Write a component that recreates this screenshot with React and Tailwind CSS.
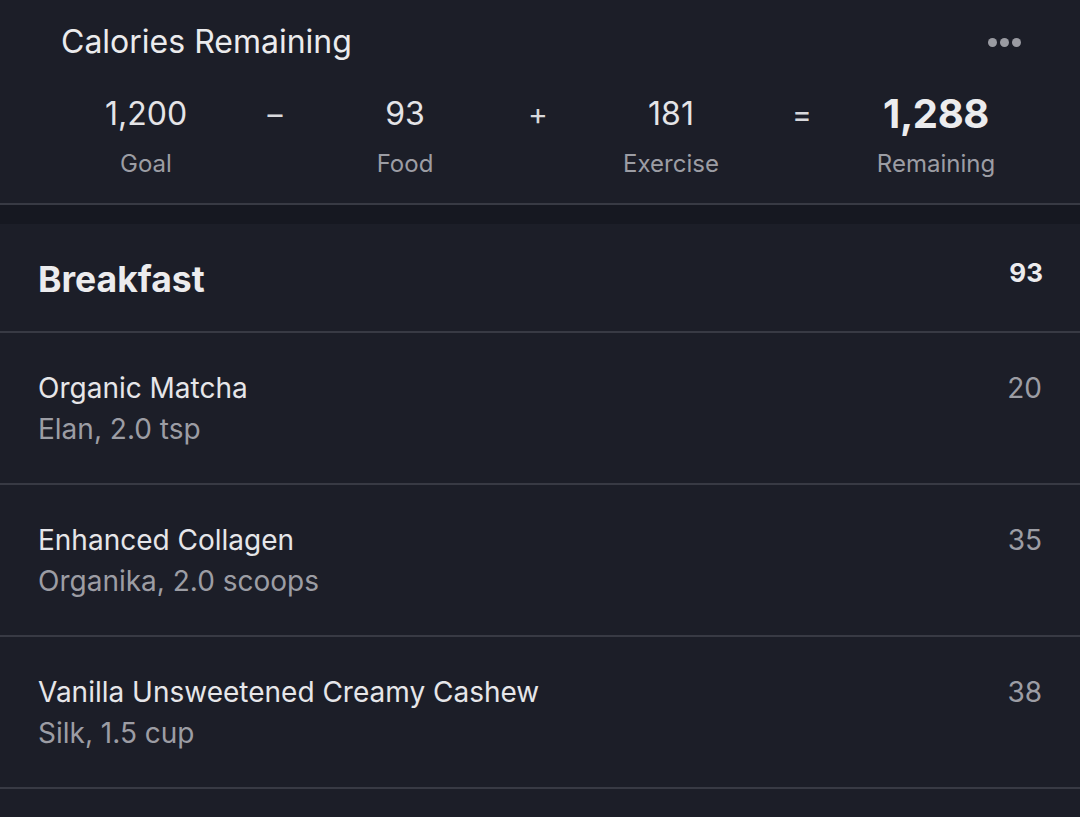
const items = [
  { name: "Organic Matcha", detail: "Elan, 2.0 tsp", cal: 20 },
  { name: "Enhanced Collagen", detail: "Organika, 2.0 scoops", cal: 35 },
  { name: "Vanilla Unsweetened Creamy Cashew", detail: "Silk, 1.5 cup", cal: 38 },
];

function Stat({ value, label, strong }) {
  return (
    <div className="flex flex-col items-center">
      <span
        className={
          strong
            ? "h-[44px] leading-[44px] text-[40px] font-bold text-[#ececee] tracking-[-0.01em]"
            : "h-[44px] leading-[44px] text-[32px] text-[#e4e4e7]"
        }
      >
        {value}
      </span>
      <span className="mt-[12px] h-[32px] leading-[32px] text-[24px] text-[#9c9da4]">{label}</span>
    </div>
  );
}

function Op({ children }) {
  return (
    <div className="flex justify-center">
      <span className="h-[44px] leading-[44px] text-[30px] text-[#d8d8dc]">{children}</span>
    </div>
  );
}

export default function App() {
  return (
    <div
      className="w-[1080px] h-[817px] overflow-hidden bg-[#1c1e28]"
      style={{ fontFamily: "Inter, 'Noto Sans', sans-serif" }}
    >
      {/* calories summary */}
      <header className="pt-[20px] pb-[23px] border-b-2 border-[#383a44]">
        <div className="flex items-center justify-between pl-[61px] pr-[59px] h-[44px]">
          <h1 className="text-[32px] font-normal text-[#ebebed]">Calories Remaining</h1>
          <div className="flex gap-[3px]">
            <span className="w-[9px] h-[9px] rounded-full bg-[#9a9ba2]" />
            <span className="w-[9px] h-[9px] rounded-full bg-[#9a9ba2]" />
            <span className="w-[9px] h-[9px] rounded-full bg-[#9a9ba2]" />
          </div>
        </div>
        <div className="mt-[28px] ml-[80px] w-[926px] grid grid-cols-[132px_126px_134px_132px_134px_128px_140px]">
          <Stat value="1,200" label="Goal" />
          <Op>–</Op>
          <Stat value="93" label="Food" />
          <Op>+</Op>
          <Stat value="181" label="Exercise" />
          <Op>=</Op>
          <Stat value="1,288" label="Remaining" strong />
        </div>
      </header>

      <div className="h-[19px] bg-[#161821]" />

      {/* breakfast */}
      <section>
        <div className="flex items-start justify-between pl-[38px] pr-[37px] pt-[34px] h-[109px] border-b-2 border-[#383a44]">
          <h2 className="text-[35.5px] leading-[44px] font-bold text-[#ececee]">Breakfast</h2>
          <span className="text-[26px] leading-[30px] font-bold text-[#ececee]">93</span>
        </div>
        {items.map((it) => (
          <div
            key={it.name}
            className="flex items-start justify-between pl-[38px] pr-[38px] pt-[35px] pb-[33px] border-b-2 border-[#383a44]"
          >
            <div className="flex flex-col">
              <span className="text-[28px] leading-[41px] text-[#e6e6e9]">{it.name}</span>
              <span className="text-[28px] leading-[41px] text-[#9c9da4]">{it.detail}</span>
            </div>
            <span className="text-[28px] leading-[41px] text-[#9c9da4]">{it.cal}</span>
          </div>
        ))}
      </section>
    </div>
  );
}
